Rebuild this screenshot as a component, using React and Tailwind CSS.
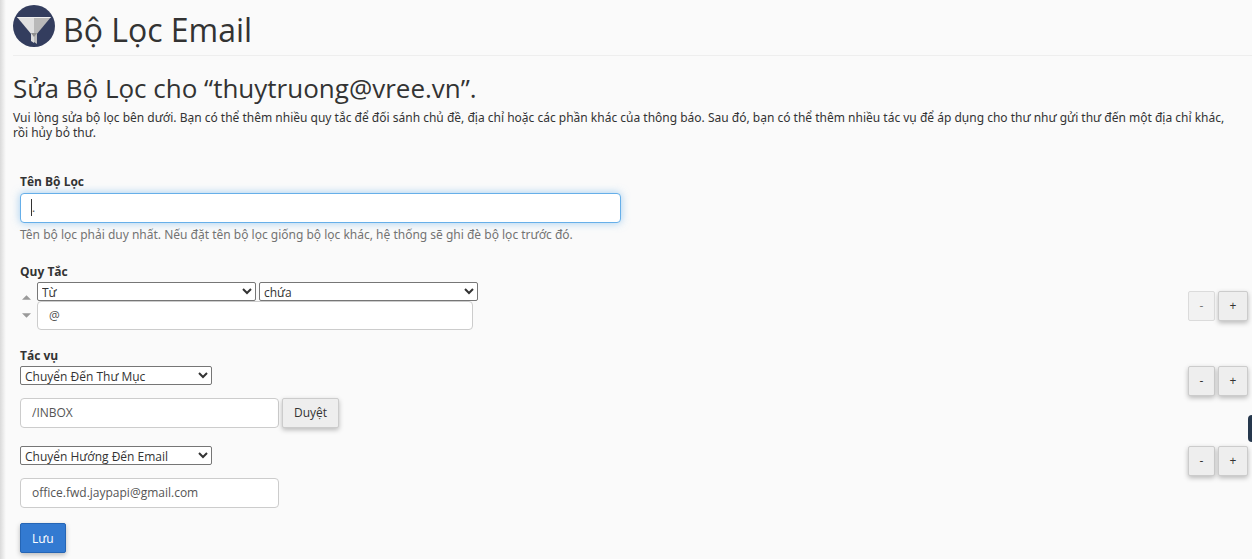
import clsx from "clsx";

const inputStyle =
  "rounded border bg-white px-[11px] text-[#555] outline-none";

function FilterIcon() {
  return (
    <svg viewBox="0 0 42 42" className="size-[42px] shrink-0" aria-hidden="true">
      <circle cx="21" cy="21" r="21" fill="#333d5e" />
      <path d="M4 12h17v18h-2z" fill="#e0e0e0" />
      <path d="M21 12h17L23 30h-2z" fill="#b9b9b9" />
      <path d="M18 28l3 1v9l-3-2z" fill="#dcdcdc" />
      <path d="M21 29l3-1v11l-3-2z" fill="#bdbdbd" />
      <path d="M18 28h6l-3 4z" fill="#8f8f8f" />
      <path d="M4 12h34l-1 1H5z" fill="#f0f0f0" />
    </svg>
  );
}

function Select({ label, options, className }) {
  return (
    <select
      aria-label={label}
      className={clsx(
        "block h-[19px] rounded-[2px] border border-[#767676] bg-white leading-[14px] text-[#333]",
        className,
      )}
    >
      {options.map((option) => (
        <option key={option}>{option}</option>
      ))}
    </select>
  );
}

function Button({ children, className, ...props }) {
  return (
    <button
      type="button"
      className={clsx(
        "h-[30px] rounded-[2px] border border-[#ccc] bg-[#eee] pb-[2px] text-[#333] shadow-[0_2px_5px_rgba(0,0,0,0.26)] disabled:opacity-65 disabled:shadow-none",
        className,
      )}
      {...props}
    >
      {children}
    </button>
  );
}

function AddRemove({ canRemove = true }) {
  return (
    <div className="flex shrink-0 gap-[3px]">
      <Button className="w-[27px]" aria-label="-" disabled={!canRemove}>
        -
      </Button>
      <Button className="w-[30px]" aria-label="+">
        +
      </Button>
    </div>
  );
}

function SortArrows() {
  return (
    <div className="flex w-[17px] flex-col gap-[13px] pt-[13px] pl-[2px]">
      <button type="button" aria-label="Lên">
        <svg viewBox="0 0 8 4" className="block h-[5px] w-[9px]">
          <path d="M0 4L4 0l4 4z" fill="#999" />
        </svg>
      </button>
      <button type="button" aria-label="Xuống">
        <svg viewBox="0 0 8 4" className="block h-[5px] w-[9px]">
          <path d="M0 0l4 4 4-4z" fill="#999" />
        </svg>
      </button>
    </div>
  );
}

export default function App() {
  return (
    <div className="min-h-screen overflow-hidden bg-[#fafafa] bg-[linear-gradient(to_right,#dadada,#fafafa_6px)] pb-[6px] pl-[13px] font-['Open_Sans',sans-serif] text-[12px] leading-[15px] text-[#333]">
      <header className="flex h-[56px] items-start gap-[8px] border-b border-[#eee] pt-[5px]">
        <FilterIcon />
        <h1 className="pt-[5px] text-[32px] leading-[40px]">Bộ Lọc Email</h1>
      </header>

      <h2 className="mt-[15px] text-[26px] leading-[34px]">
        Sửa Bộ Lọc cho “thuytruong@vree.vn”.
      </h2>
      <p className="mt-[5px] pr-[10px] font-['Noto_Sans',sans-serif]">
        Vui lòng sửa bộ lọc bên dưới. Bạn có thể thêm nhiều quy tắc để đối sánh
        chủ đề, địa chỉ hoặc các phần khác của thông báo. Sau đó, bạn có thể
        thêm nhiều tác vụ để áp dụng cho thư như gửi thư đến một địa chỉ khác,
        rồi hủy bỏ thư.
      </p>

      <form className="mt-[34px] pr-[4px] pl-[7px]">
        <label htmlFor="filter-name" className="block font-bold">
          Tên Bộ Lọc
        </label>
        <div className="relative mt-[4px] max-w-[601px]">
          <input
            id="filter-name"
            defaultValue="."
            className={clsx(
              inputStyle,
              "block h-[30px] w-full border-[#66afe9] pb-[2px] caret-transparent shadow-[0_0_8px_rgba(102,175,233,0.6)]",
            )}
          />
          <span className="absolute top-[6px] left-[11px] h-[17px] w-px bg-[#333]" />
        </div>
        <p className="mt-[4px] font-['Noto_Sans',sans-serif] text-[#737373]">
          Tên bộ lọc phải duy nhất. Nếu đặt tên bộ lọc giống bộ lọc khác, hệ
          thống sẽ ghi đè bộ lọc trước đó.
        </p>

        {/* Rules */}
        <h3 className="mt-[22px] font-bold">Quy Tắc</h3>
        <div className="mt-[3px] flex items-center justify-between">
          <div className="flex">
            <SortArrows />
            <div>
              <div className="flex gap-[3px]">
                <Select
                  label="Trường"
                  className="w-[219px]"
                  options={["Từ", "Chủ đề", "Đến"]}
                />
                <Select
                  label="Điều kiện"
                  className="w-[219px]"
                  options={["chứa", "không chứa", "bằng"]}
                />
              </div>
              <input
                aria-label="Giá trị"
                defaultValue="@"
                className={clsx(
                  inputStyle,
                  "block h-[29px] w-[436px] border-[#ccc]",
                )}
              />
            </div>
          </div>
          <AddRemove canRemove={false} />
        </div>

        {/* Actions */}
        <h3 className="mt-[18px] font-bold">Tác vụ</h3>
        <div className="mt-[3px] flex items-start justify-between">
          <div>
            <Select
              label="Tác vụ"
              className="w-[192px]"
              options={["Chuyển Đến Thư Mục", "Chuyển Hướng Đến Email"]}
            />
            <div className="mt-[13px] flex gap-[3px]">
              <input
                aria-label="Thư mục"
                defaultValue="/INBOX"
                className={clsx(
                  inputStyle,
                  "h-[30px] w-[259px] border-[#ccc] pb-[2px]",
                )}
              />
              <Button className="px-[11px]">Duyệt</Button>
            </div>
          </div>
          <AddRemove />
        </div>
        <div className="mt-[18px] flex items-start justify-between">
          <div>
            <Select
              label="Tác vụ"
              className="w-[192px]"
              options={["Chuyển Hướng Đến Email", "Chuyển Đến Thư Mục"]}
            />
            <input
              aria-label="Email"
              defaultValue="office.fwd.jaypapi@gmail.com"
              className={clsx(
                inputStyle,
                "mt-[13px] block h-[30px] w-[259px] border-[#ccc] pb-[2px]",
              )}
            />
          </div>
          <AddRemove />
        </div>

        <button
          type="submit"
          className="mt-[15px] block h-[30px] rounded-[2px] border border-[#2565b5] bg-[#337ad1] px-[11px] text-white shadow-[0_2px_5px_rgba(0,0,0,0.26)]"
        >
          Lưu
        </button>
      </form>

      <div className="fixed top-[415px] right-0 h-[27px] w-[4px] rounded-l-[4px] bg-[#26384d]" />
    </div>
  );
}
